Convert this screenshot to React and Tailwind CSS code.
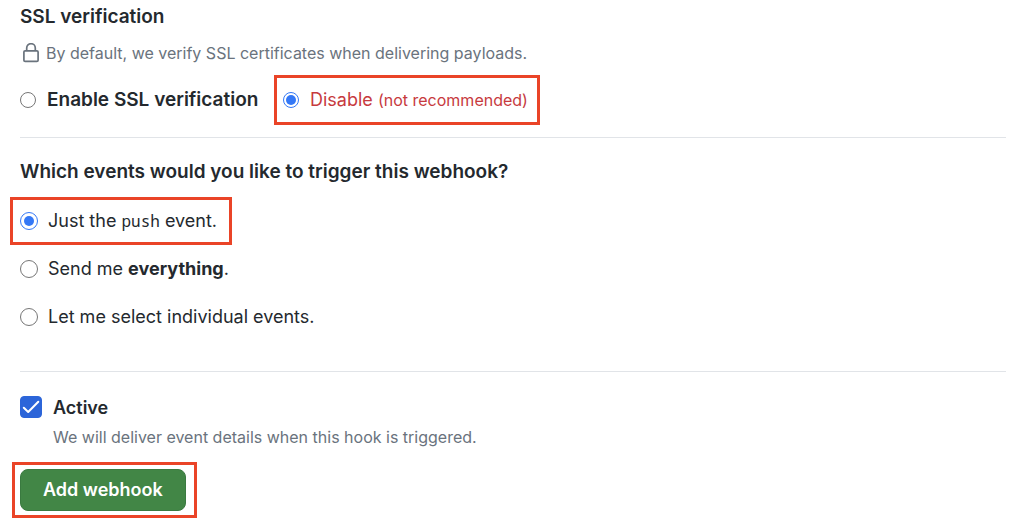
import React from "react";

function Radio({ large = false, ...props }) {
  return (
    <input
      type="radio"
      className={`m-0 shrink-0 appearance-none rounded-full border border-[#767676] bg-white checked:border-[#3478f6] checked:bg-[#3478f6] checked:bg-clip-content ${
        large ? "size-[18px] checked:p-[3px]" : "size-4 checked:p-[2px]"
      }`}
      {...props}
    />
  );
}

function LockIcon() {
  return (
    <svg viewBox="0 0 16 20" className="h-5 w-4 shrink-0" fill="none" stroke="#6a737d" strokeWidth="1.7" aria-hidden="true">
      <rect x="0.9" y="7.8" width="14.2" height="10.6" rx="1.2" />
      <path d="M3.7 7.8V5a4.3 4.3 0 0 1 8.6 0v2.8" />
    </svg>
  );
}

export default function App() {
  return (
    <form
      className="bg-white pt-[5px] pr-[18px] pl-5 font-[Inter,'Liberation_Sans',sans-serif] text-lg leading-6 text-[#24292e]"
      onSubmit={(e) => e.preventDefault()}
    >
      <fieldset>
        <legend className="text-[19px] leading-6 font-semibold">SSL verification</legend>
        <p className="mt-3 flex items-center gap-[7px] pl-[3px] text-base leading-6 text-[#6a737d]">
          <LockIcon />
          By default, we verify SSL certificates when delivering payloads.
        </p>
        <div className="mt-[10px] flex items-center">
          <label className="flex w-[254px] items-center gap-[11px] text-[19px] font-semibold whitespace-nowrap">
            <Radio name="ssl" />
            Enable SSL verification
          </label>
          <label className="flex h-[50px] items-center gap-[11px] border-[3px] border-[#ea4427] pr-[9px] pl-[6px] whitespace-nowrap text-[#c73a3e]">
            <Radio name="ssl" defaultChecked />
            <span>
              Disable <span className="text-base">(not recommended)</span>
            </span>
          </label>
        </div>
      </fieldset>

      <hr className="mt-3 border-[#e1e4e8]" />

      <fieldset className="mt-[22px]">
        <legend className="text-[19px] leading-6 font-semibold">
          Which events would you like to trigger this webhook?
        </legend>
        <div className="mt-[13px] flex flex-col items-start">
          <label className="-ml-[10px] flex h-12 items-center gap-[10px] border-[3px] border-[#ea4427] pr-3 pl-[7px]">
            <Radio large name="events" defaultChecked />
            <span>
              Just the <code className="font-['Noto_Sans_Mono','DejaVu_Sans_Mono',monospace] text-base">push</code> event.
            </span>
          </label>
          <label className="flex h-12 items-center gap-[10px]">
            <Radio large name="events" />
            <span>
              Send me <strong className="font-bold">everything</strong>.
            </span>
          </label>
          <label className="flex h-12 items-center gap-[10px]">
            <Radio large name="events" />
            <span>Let me select individual events.</span>
          </label>
        </div>
      </fieldset>

      <hr className="mt-[30px] border-[#e1e4e8]" />

      <div className="mt-6 flex gap-[11px]">
        <span className="grid size-[22px] shrink-0">
          <input
            id="active"
            type="checkbox"
            defaultChecked
            aria-describedby="active-note"
            className="peer col-start-1 row-start-1 m-0 size-[22px] appearance-none rounded border border-[#767676] checked:border-[#2c65d9] checked:bg-[#2c65d9]"
          />
          <svg viewBox="0 0 22 22" className="pointer-events-none invisible col-start-1 row-start-1 size-[22px] peer-checked:visible" fill="none" stroke="white" strokeWidth="2" strokeLinecap="round" strokeLinejoin="round" aria-hidden="true">
            <path d="M3.8 11.8 8.2 16 18.3 5.8" />
          </svg>
        </span>
        <div>
          <label htmlFor="active" className="block font-semibold">Active</label>
          <p id="active-note" className="mt-[5px] text-base leading-6 text-[#6a737d]">
            We will deliver event details when this hook is triggered.
          </p>
        </div>
      </div>

      <div className="mt-[13px] -ml-2 w-fit border-[3px] border-[#ea4427] py-1 pr-2 pl-[5px]">
        <button type="submit" className="h-[42px] rounded-lg border border-[#3a7a40] bg-[#428646] px-[22px] font-semibold text-white">
          Add webhook
        </button>
      </div>
    </form>
  );
}
